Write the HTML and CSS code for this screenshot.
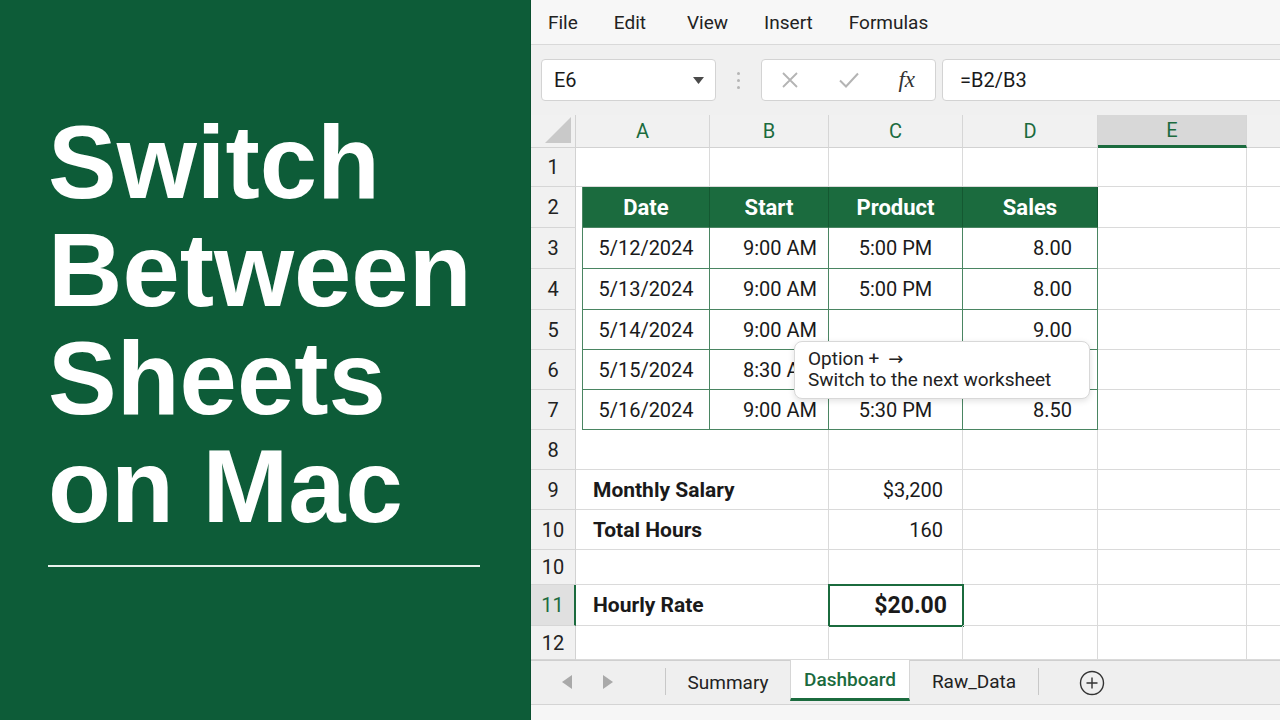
FILE: index.html
```html
<!DOCTYPE html>
<html lang="en">
<head>
    <meta charset="UTF-8">
    <meta name="viewport" content="width=device-width, initial-scale=1.0">
    <title>Switch Between Sheets on Mac</title>
    <link rel="stylesheet" href="styles.css">
</head>
<body>
    <div class="page">
        <aside class="cover">
            <h1 class="title">Switch<br>Between<br>Sheets<br>on Mac</h1>
            <div class="rule"></div>
        </aside>

        <main class="excel">
            <nav class="menubar">
                <span>File</span>
                <span>Edit</span>
                <span class="wide">View</span>
                <span>Insert</span>
                <span>Formulas</span>
            </nav>

            <div class="formula-bar">
                <div class="name-box">
                    <span>E6</span>
                    <svg width="11" height="7" viewBox="0 0 11 7"><path d="M0 0h11L5.5 7z" fill="#4a4a4a"/></svg>
                </div>
                <div class="grip"><i></i><i></i><i></i></div>
                <div class="fx-buttons">
                    <svg width="18" height="18" viewBox="0 0 18 18"><path d="M2 2l14 14M16 2L2 16" stroke="#b4b4b4" stroke-width="1.8" fill="none"/></svg>
                    <svg width="22" height="18" viewBox="0 0 22 18"><path d="M2 9.5l6 6L20 2.5" stroke="#b4b4b4" stroke-width="2" fill="none"/></svg>
                    <span class="fx">fx</span>
                </div>
                <div class="formula-input">=B2/B3</div>
            </div>

            <div class="sheet">
                <!-- column headers -->
                <div class="corner"><svg width="28" height="28" viewBox="0 0 28 28"><path d="M27 1v26H1z" fill="#c9c9c9"/></svg></div>
                <div class="ch">A</div>
                <div class="ch">B</div>
                <div class="ch">C</div>
                <div class="ch">D</div>
                <div class="ch active">E</div>
                <div class="ch last"></div>

                <!-- row 1 -->
                <div class="rh">1</div>
                <div class="c"></div><div class="c"></div><div class="c"></div><div class="c"></div><div class="c"></div><div class="c last"></div>

                <!-- row 2: table header -->
                <div class="rh">2</div>
                <div class="c th first">Date</div>
                <div class="c th">Start</div>
                <div class="c th">Product</div>
                <div class="c th">Sales</div>
                <div class="c"></div><div class="c last"></div>

                <!-- rows 3-7 -->
                <div class="rh">3</div>
                <div class="c t first ctr">5/12/2024</div>
                <div class="c t rt">9:00 AM</div>
                <div class="c t ctr">5:00 PM</div>
                <div class="c t rt sales">8.00</div>
                <div class="c"></div><div class="c last"></div>

                <div class="rh">4</div>
                <div class="c t first ctr">5/13/2024</div>
                <div class="c t rt">9:00 AM</div>
                <div class="c t ctr">5:00 PM</div>
                <div class="c t rt sales">8.00</div>
                <div class="c"></div><div class="c last"></div>

                <div class="rh">5</div>
                <div class="c t first ctr">5/14/2024</div>
                <div class="c t rt">9:00 AM</div>
                <div class="c t ctr"></div>
                <div class="c t rt sales">9.00</div>
                <div class="c"></div><div class="c last"></div>

                <div class="rh">6</div>
                <div class="c t first ctr">5/15/2024</div>
                <div class="c t rt">8:30 AM</div>
                <div class="c t ctr"></div>
                <div class="c t rt sales"></div>
                <div class="c"></div><div class="c last"></div>

                <div class="rh">7</div>
                <div class="c t first ctr">5/16/2024</div>
                <div class="c t rt">9:00 AM</div>
                <div class="c t ctr">5:30 PM</div>
                <div class="c t rt sales">8.50</div>
                <div class="c"></div><div class="c last"></div>

                <!-- summary block -->
                <div class="rh">8</div>
                <div class="c span2"></div><div class="c"></div><div class="c"></div><div class="c"></div><div class="c last"></div>

                <div class="rh">9</div>
                <div class="c span2 label">Monthly Salary</div>
                <div class="c rt value">$3,200</div>
                <div class="c"></div><div class="c"></div><div class="c last"></div>

                <div class="rh">10</div>
                <div class="c span2 label">Total Hours</div>
                <div class="c rt value">160</div>
                <div class="c"></div><div class="c"></div><div class="c last"></div>

                <div class="rh">10</div>
                <div class="c span2"></div><div class="c"></div><div class="c"></div><div class="c"></div><div class="c last"></div>

                <div class="rh active">11</div>
                <div class="c span2 label">Hourly Rate</div>
                <div class="c rt value selected">$20.00</div>
                <div class="c"></div><div class="c"></div><div class="c last"></div>

                <div class="rh">12</div>
                <div class="c span2"></div><div class="c"></div><div class="c"></div><div class="c"></div><div class="c last"></div>

                <div class="tooltip">
                    <div>Option + <span class="key">→</span></div>
                    <div>Switch to the next worksheet</div>
                </div>
            </div>

            <div class="tabbar">
                <div class="tab-nav">
                    <svg width="10" height="14" viewBox="0 0 10 14"><path d="M10 0v14L0 7z" fill="#a9a9a9"/></svg>
                    <svg width="10" height="14" viewBox="0 0 10 14"><path d="M0 0v14l10-7z" fill="#a9a9a9"/></svg>
                </div>
                <div class="sheet-tab summary">Summary</div>
                <div class="sheet-tab current">Dashboard</div>
                <div class="sheet-tab raw">Raw_Data</div>
                <div class="add-sheet">
                    <svg width="26" height="26" viewBox="0 0 26 26"><circle cx="13" cy="13" r="11.5" stroke="#333" stroke-width="1.4" fill="none"/><path d="M13 7.5v11M7.5 13h11" stroke="#333" stroke-width="1.4"/></svg>
                </div>
            </div>
            <div class="statusbar"></div>
        </main>
    </div>
</body>
</html>
```

FILE: styles.css
```css
:root {
    --excel-green: #1b6b3e;
    --cover-green: #0d5c38;
    --table-line: #4a8562;
    --grid-line: #dadada;
    --header-bg: #f1f1f1;
    --text: #1a1a1a;
}

* {
    margin: 0;
    padding: 0;
    box-sizing: border-box;
}

body {
    width: 1280px;
    height: 720px;
    overflow: hidden;
    font-family: Roboto, "Liberation Sans", sans-serif;
    color: var(--text);
}

.page {
    display: flex;
    height: 720px;
}

/* left title panel */
.cover {
    width: 531px;
    flex-shrink: 0;
    background-color: var(--cover-green);
    border-right: 1px solid #0a5030;
    padding: 109px 50px 0 48px;
}

.title {
    font-family: "Liberation Sans", Arial, sans-serif;
    font-weight: 700;
    font-size: 103px;
    line-height: 108px;
    color: #fff;
}

.rule {
    margin-top: 24px;
    width: 432px;
    height: 2px;
    background-color: #e8f2ec;
}

/* spreadsheet window */
.excel {
    flex: 1;
    display: flex;
    flex-direction: column;
    background-color: #f0f0f0;
    overflow: hidden;
}

.menubar {
    height: 45px;
    display: flex;
    align-items: center;
    gap: 36px;
    padding-left: 17px;
    background-color: #f7f7f7;
    border-bottom: 1px solid #d9d9d9;
    font-size: 19px;
    color: #222;
}

.menubar .wide {
    margin-left: 5px;
}

.formula-bar {
    height: 70px;
    display: flex;
    align-items: center;
    padding-left: 10px;
    background-color: #f0f0f0;
}

.name-box {
    width: 175px;
    height: 42px;
    display: flex;
    align-items: center;
    justify-content: space-between;
    padding: 0 11px 0 12px;
    background-color: #fff;
    border: 1px solid #d3d3d3;
    border-radius: 4px;
    font-size: 20px;
}

.grip {
    width: 45px;
    display: flex;
    flex-direction: column;
    align-items: center;
    gap: 4px;
}

.grip i {
    width: 3px;
    height: 3px;
    border-radius: 50%;
    background-color: #b5b5b5;
}

.fx-buttons {
    width: 175px;
    height: 42px;
    display: flex;
    align-items: center;
    padding: 0 20px 0 19px;
    justify-content: space-between;
    background-color: #fff;
    border: 1px solid #d3d3d3;
    border-radius: 4px;
}

.fx {
    font-family: "Liberation Serif", serif;
    font-style: italic;
    font-size: 23px;
    color: #333;
}

.formula-input {
    flex: 1;
    height: 42px;
    margin-left: 6px;
    margin-right: -12px;
    display: flex;
    align-items: center;
    padding-left: 17px;
    background-color: #fff;
    border: 1px solid #d3d3d3;
    border-radius: 4px;
    font-size: 20px;
}

/* grid */
.sheet {
    position: relative;
    display: grid;
    grid-template-columns: 45px 134px 119px 134px 135px 149px 1fr;
    grid-template-rows: 33px 39px 41px 41px 41px 40px 40px 40px 40px 40px 40px 35px 41px 34px;
    background-color: #fff;
}

.corner {
    display: flex;
    align-items: flex-end;
    justify-content: flex-end;
    padding: 0 3px 3px 0;
    background-color: var(--header-bg);
    border-right: 1px solid #d2d2d2;
    border-bottom: 1px solid #d2d2d2;
}

.ch {
    display: flex;
    align-items: center;
    justify-content: center;
    background-color: var(--header-bg);
    border-right: 1px solid #d6d6d6;
    border-bottom: 1px solid #d2d2d2;
    font-size: 20px;
    color: var(--excel-green);
}

.ch.active {
    background-color: #d8d8d8;
    border-bottom: 3px solid var(--excel-green);
}

.rh {
    display: flex;
    align-items: center;
    justify-content: center;
    background-color: var(--header-bg);
    border-right: 1px solid #d2d2d2;
    border-bottom: 1px solid #d6d6d6;
    font-size: 20px;
    color: #222;
}

.rh.active {
    background-color: #e0e0e0;
    color: var(--excel-green);
    border-right: 2px solid var(--excel-green);
}

.c {
    display: flex;
    align-items: center;
    padding: 0 11px;
    border-right: 1px solid var(--grid-line);
    border-bottom: 1px solid var(--grid-line);
    font-size: 20px;
    white-space: nowrap;
}

.last {
    border-right: none;
}

.span2 {
    grid-column: span 2;
}

.ctr {
    justify-content: center;
}

.rt {
    justify-content: flex-end;
}

.t {
    border-color: var(--table-line);
}

.th {
    justify-content: center;
    background-color: var(--excel-green);
    border-right-color: #145831;
    border-bottom-color: var(--table-line);
    color: #fff;
    font-weight: 700;
    font-size: 22px;
}

.first {
    margin-left: 6px;
    border-left: 1px solid var(--table-line);
}

.sales {
    padding-right: 25px;
}

.label {
    padding-left: 17px;
    font-weight: 700;
    font-size: 21px;
}

.value {
    padding-right: 19px;
}

.selected {
    padding-right: 15px;
    outline: 2px solid var(--excel-green);
    outline-offset: -1px;
    font-weight: 700;
    font-size: 23px;
}

.tooltip {
    position: absolute;
    left: 263px;
    top: 226px;
    width: 296px;
    height: 58px;
    padding: 6px 13px;
    background-color: #fff;
    border: 1px solid #d8d8d8;
    border-radius: 8px;
    box-shadow: 0 2px 6px rgba(0, 0, 0, 0.12);
    font-size: 19px;
    line-height: 21px;
    color: #222;
}

.tooltip .key {
    margin-left: 4px;
    font-family: "DejaVu Sans", sans-serif;
    font-size: 18px;
}

/* sheet tabs */
.tabbar {
    height: 45px;
    display: flex;
    align-items: stretch;
    background-color: #efefef;
    border-top: 1px solid #cfcfcf;
    border-bottom: 1px solid #d4d4d4;
}

.tab-nav {
    width: 135px;
    display: flex;
    align-items: center;
    gap: 31px;
    padding-left: 31px;
    border-right: 1px solid #c8c8c8;
    margin: 7px 0 9px;
}

.sheet-tab {
    display: flex;
    align-items: center;
    justify-content: center;
    font-size: 19px;
    color: #222;
}

.summary {
    width: 124px;
}

.current {
    width: 120px;
    margin-top: -1px;
    margin-bottom: 3px;
    background-color: #fff;
    border-left: 1px solid #d6d6d6;
    border-right: 1px solid #d6d6d6;
    border-bottom: 3px solid var(--excel-green);
    color: var(--excel-green);
    font-weight: 500;
}

.raw {
    width: 129px;
    margin: 7px 0 9px;
    border-right: 1px solid #c8c8c8;
}

.add-sheet {
    display: flex;
    align-items: center;
    padding-left: 40px;
}

.statusbar {
    flex: 1;
    background-color: #f6f6f6;
}
```
